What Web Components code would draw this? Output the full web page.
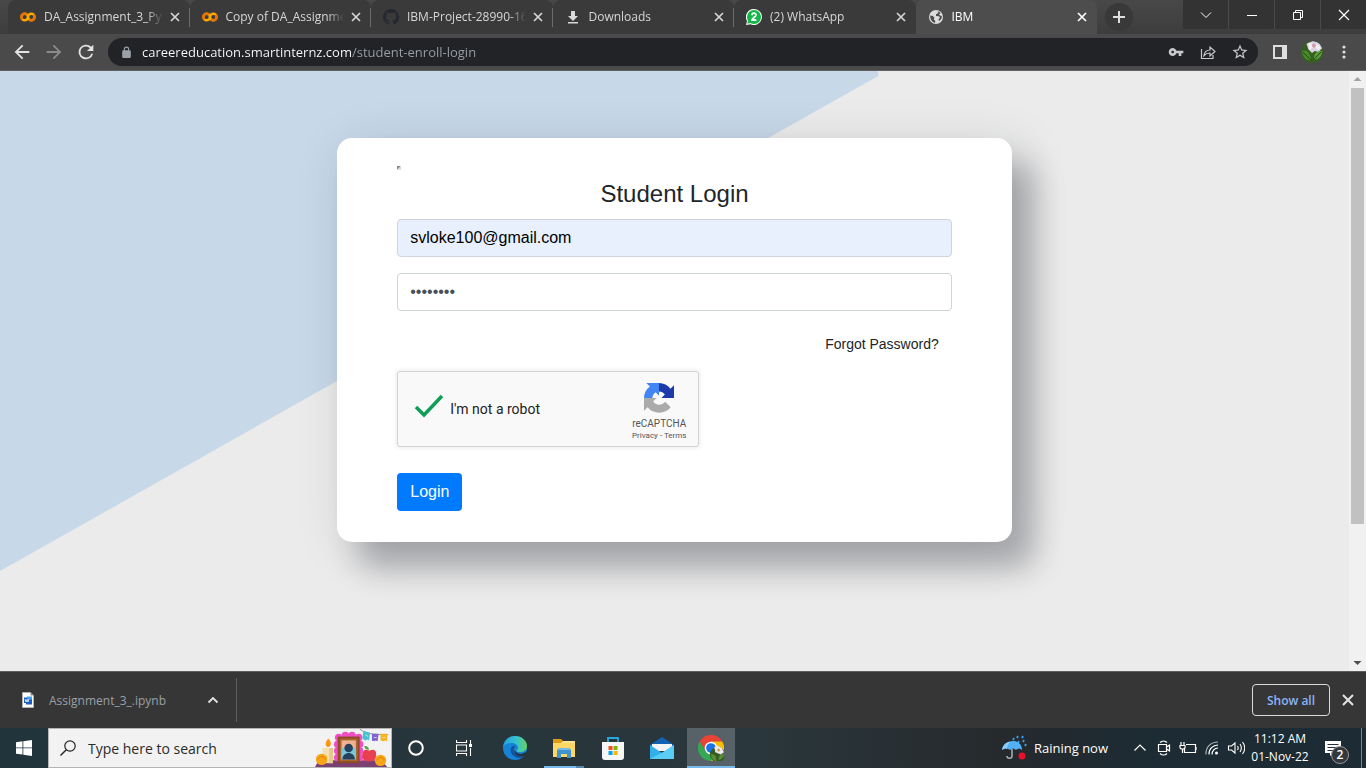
<!DOCTYPE html>
<html lang="en">
<head>
<meta charset="utf-8">
<title>IBM</title>
<style>
html,body{margin:0;height:100%}
body{font-family:"Open Sans","Noto Sans",sans-serif;font-size:12px;overflow:hidden}
</style>
</head>
<body>
<desktop-shell></desktop-shell>
<script>
const ICONS = {
colab:['0 0 24 24','<g fill="none" stroke-width="3.6"><circle cx="7" cy="12" r="4.9" stroke="#f9ab00"/><path d="M10.5 8.500A4.900 4.900 0 0 0 3.500 15.500" stroke="#e8710a"/><circle cx="17" cy="12" r="4.900" stroke="#f9ab00"/><path d="M13.500 15.500A4.900 4.900 0 0 0 20.500 8.500" stroke="#e8710a"/></g>'],
github:['0 0 16 16','<path fill="#24292f" d="M8 0C3.580 0 0 3.580 0 8c0 3.540 2.290 6.530 5.470 7.590.4.070.55-.17.55-.38 0-.19-.010-.82-.010-1.490-2.010.37-2.530-.49-2.690-.94-.090-.23-.48-.94-.82-1.130-.28-.15-.68-.52-.010-.53.63-.010 1.080.58 1.230.82.72 1.210 1.870.87 2.330.66.070-.52.28-.87.51-1.070-1.780-.2-3.640-.89-3.640-3.950 0-.87.31-1.590.82-2.150-.080-.2-.36-1.020.080-2.120 0 0 .67-.21 2.200.82a7.600 7.600 0 0 1 4 0c1.530-1.040 2.200-.82 2.200-.82.44 1.100.16 1.920.080 2.120.51.56.82 1.270.82 2.150 0 3.070-1.870 3.750-3.650 3.950.29.25.54.73.54 1.480 0 1.070-.010 1.930-.010 2.200 0 .21.15.46.55.38A8 8 0 0 0 16 8c0-4.420-3.580-8-8-8z"/>'],
download:['0 0 16 16','<path fill="#dadada" d="M6 2h4v5h3l-5 5-5-5h3zM3 13h10v1.500H3z"/>'],
whatsapp:['0 0 16 16','<path fill="#fff" d="M8 0a8 8 0 1 1-3.500 15.200L0 16l1-4A8 8 0 0 1 8 0z"/><circle cx="8" cy="8" r="7" fill="#12b846"/><path d="M1.200 14.800l1-4 3 3z" fill="#12b846"/><path d="M6 6.200c0-2.600 4-2.600 4-.2 0 1.800-4 3.200-4 5h4.400" fill="none" stroke="#fff" stroke-width="1.800"/>'],
globe:['0 0 16 16','<circle cx="8" cy="8" r="7" fill="#dcdcdc"/><path fill="#4b4b4b" d="M2.200 6.500 5 7l1.500 2-.8 1.500 1.500 1.300v2C4 13 2 10.500 2.200 6.500zM8.500 2l2 .5-.5 1.800-2 1L8 7l3 .3 1 1.500-1.500 1.500.5 1.700c2-1 3-3 2.800-5L12 6.500l-1-1L12.500 4C11.500 2.500 10 2 8.500 2z"/>'],
close:['0 0 16 16','<path d="M4 4l8 8m0-8l-8 8" stroke="currentColor" stroke-width="1.700"/>'],
plus:['0 0 16 16','<path d="M8 2v12M2 8h12" stroke="#dedede" stroke-width="2"/>'],
down:['0 0 16 16','<path d="M3 5.500l5 5 5-5" fill="none" stroke="#fff"/>'],
min:['0 0 16 16','<path d="M3 8.500h10" stroke="#fff"/>'],
max:['0 0 16 16','<path d="M3.500 5.500h7v7h-7zM5.500 5.500v-2h7v7h-2" fill="none" stroke="#fff"/>'],
wclose:['0 0 16 16','<path d="M3 3l10 10m0-10L3 13" stroke="#fff" stroke-width="1.200"/>'],
back:['0 0 24 24','<path fill="#e4e4e4" d="M20 11H7.830l5.590-5.590L12 4l-8 8 8 8 1.410-1.410L7.830 13H20z"/>'],
forward:['0 0 24 24','<path fill="#8b8b8b" d="M4 11h12.170l-5.590-5.590L12 4l8 8-8 8-1.410-1.410L16.170 13H4z"/>'],
reload:['0 0 24 24','<path fill="#e4e4e4" d="M17.650 6.350A8 8 0 1 0 19.730 14h-2.080A6 6 0 1 1 12 6c1.660 0 3.140.69 4.220 1.780L13 11h7V4z"/>'],
lock:['0 0 24 24','<path fill="#9aa0a6" d="M18 8h-1V6A5 5 0 0 0 7 6v2H6a2 2 0 0 0-2 2v10a2 2 0 0 0 2 2h12a2 2 0 0 0 2-2V10a2 2 0 0 0-2-2zM9 6a3 3 0 0 1 6 0v2H9z"/>'],
key:['0 0 24 24','<path fill="#c8c9cb" d="M12.700 10A6 6 0 1 0 12.700 14H16v4h4v-4h3v-4zM7 14a2 2 0 1 1 0-4 2 2 0 0 1 0 4z"/>'],
share:['0 0 16 16','<path d="M1.500 5v9.500H13V11M4 11.500c.5-3.500 2.500-5.500 6-5.500V3l5 4.500-5 4.500V9c-2.500 0-4.500.8-6 2.500z" fill="none" stroke="#c8c9cb" stroke-width="1.200"/>'],
star:['0 0 24 24','<path fill="#c8c9cb" d="M22 9.240l-7.190-.62L12 2 9.190 8.630 2 9.240l5.460 4.730L5.820 21 12 17.270 18.180 21l-1.630-7.030zM12 15.400l-3.760 2.270 1-4.280-3.320-2.880 4.380-.38L12 6.100l1.710 4.040 4.380.38-3.320 2.880 1 4.280z"/>'],
panel:['0 0 16 16','<path fill="#dedede" fill-rule="evenodd" d="M1 1h14v14H1zM3 3v10h7V3z"/>'],
avatar:['0 0 24 24','<clipPath id="c"><circle cx="12" cy="12" r="12"/></clipPath><g clip-path="url(#c)"><path fill="#35601f" d="M0 0h24v24H0z"/><path fill="#3c5a28" d="M0 4l7-4 2 7-7 3z"/><path fill="#d9d3e4" d="M6 3l7-3 7 2 3 6-4 4-4-1-3 2-4-4z"/><path fill="#f3eff6" d="M8 2l4 1 1 4-4 3zM17 3l4 3-1 4-4-2z"/><circle cx="14" cy="5" r="2.200" fill="#d49fbd"/><circle cx="14" cy="6" r="1" fill="#c8a840"/><path fill="#4b8a2c" d="M1 11c5-2 9 2 10 10-6 1-9-4-10-10z"/><path fill="#5c9a3c" d="M23 11c-6 0-9 2-9 9 5 1 9-3 9-9z"/><path stroke="#1f3d10" fill="none" d="M2 12l9 9M22 12l-8 8"/></g>'],
dots:['0 0 16 16','<g fill="#dedede"><circle cx="8" cy="3" r="1.600"/><circle cx="8" cy="8" r="1.600"/><circle cx="8" cy="13" r="1.600"/></g>'],
broken:['0 0 4 4','<path fill="#888" d="M0 0h4L0 4z"/><path fill="#ddd" d="M4 0v4H0z"/>'],
recaptcha:['0 0 64 64','<path fill="#1c3aa9" d="M64 32V5l-7.500 7.500A31.900 31.900 0 0 0 32 0v18a15 15 0 0 1 12.500 6.700L37 32z"/><path fill="#4285f4" d="M32 0H5l7.500 7.500A31.900 31.900 0 0 0 0 32h18a15 15 0 0 1 6.700-12.500L32 27z"/><path fill="#ababab" d="M0 32v27l7.500-7.500A31.900 31.900 0 0 0 57 51.500L45 40a15 15 0 0 1-25.500-1L27 32z"/>'],
doc:['0 0 12 16','<path fill="#fff" stroke="#b8b8b8" stroke-width=".8" d="M.5.5h8l3 3v12H.5z"/><path fill="#888" d="M8.500 0L12 3.500H8.500z"/><path fill="#1b5ebe" d="M2 5.500h8v7H4V11H2z"/><path fill="#41a5ee" d="M5 4.500h5v3H5z"/><path d="M3 7l1 3 1-2.500L6 10l1-3" fill="none" stroke="#fff" stroke-width=".8"/>'],
up:['0 0 16 16','<path d="M3.500 10.500L8 6l4.500 4.500" fill="none" stroke="#e2e2e2" stroke-width="1.800"/>'],
start:['0 0 16 16','<path fill="#fff" d="M0 2.200l6.500-.9v6.200H0zM7.300 1.200L16 0v7.500H7.300zM0 8.300h6.500v6.300L0 13.700zM7.300 8.300H16V16l-8.700-1.200z"/>'],
search:['0 0 16 16','<circle cx="10" cy="6" r="5.200" fill="none" stroke="#222" stroke-width="1.200"/><path d="M6.300 9.700L.5 15.500" stroke="#222" stroke-width="1.400"/>'],
altar:['0 0 78 40','<path fill="#7b3f74" d="M3 35l12-2h55l6 7H0z"/><g fill="#f04fc4"><circle cx="25" cy="9" r="4"/><circle cx="32" cy="7" r="4"/><circle cx="39" cy="7" r="4"/><circle cx="46" cy="9" r="4"/><circle cx="24" cy="16" r="4"/><circle cx="24" cy="23" r="4"/><circle cx="24" cy="30" r="4"/><circle cx="47" cy="16" r="4"/><circle cx="47" cy="23" r="4"/><circle cx="47" cy="30" r="4"/></g><path fill="#8b4b22" d="M24 8h23v28H24z"/><path fill="#a9662f" d="M26 10h19v24H26z"/><path fill="#efb393" d="M28 12h15v20H28z"/><path fill="#7cc6da" d="M28 20h15v12H28z"/><circle cx="35.500" cy="20" r="4.500" fill="#27405d"/><path fill="#27405d" d="M29 32c0-9 13-9 13 0z"/><path fill="#f4dfb0" d="M8 20h11v16H8z"/><path fill="#e8c887" d="M15 20h4v16h-4z"/><path fill="#ff9416" d="M14 10c5 5 2 9 0 9s-5-3 0-9z"/><g fill="#f7a617"><circle cx="7" cy="32" r="6"/><circle cx="69" cy="33" r="6"/></g><path fill="none" stroke="#dc7b0b" d="M3 32c2-4 7-4 8 0M65 33c2-4 7-4 8 0"/><path fill="#e83f51" d="M57 23c8-4 9 4 6 9-3 3-9 3-12 0-3-5 0-13 6-9z"/><path fill="#50a844" d="M57 22c-1-4-3-4-5-4 0 3 2 4 5 4z"/><path fill="none" stroke="#666" stroke-width=".7" d="M47 0c8 6 18 6 30 6"/><path fill="#45c1d4" d="M51 2l7 2-1 8-2-1-2 1-3-2z"/><path fill="#8065cf" d="M60 5h7l-1 8-2-1-2 1-2-1z"/><path fill="#f8b321" d="M69 5h7v8l-2-1-2 1-3-1z"/><path stroke="#fff" opacity=".7" d="M53 6l3 2M62 9h3M71 9h3"/>'],
cortana:['0 0 16 16','<circle cx="8" cy="8" r="6.800" fill="none" stroke="#fff" stroke-width="2"/>'],
taskview:['0 0 16 16','<path fill="none" stroke="#fff" stroke-width="1.100" d="M.5 0v2.500h10V0M.5 16v-2.500h10V16M.5 5h10v6H.5zM14.500 0v4M14.500 8v8"/><path fill="#fff" d="M13 4h3v3h-3z"/>'],
edge:['0 0 24 24','<linearGradient id="e" x1="0" x2="1"><stop stop-color="#249dde"/><stop offset=".55" stop-color="#35c3d0"/><stop offset="1" stop-color="#66d35d"/></linearGradient><circle cx="12" cy="12" r="12" fill="#1583d7"/><path fill="url(#e)" d="M0 11C1 4 6 0 12 0c7 0 12 5 12 10 0 4-3 6-7 6-3 0-4-1-3-2 2-2 1-6-4-7-4-.5-8 1-10 4z"/><path fill="#1351a0" d="M8.500 11c-3 5 2 11 8 11 3 0 5-2 6-4-5 3-12 1-12-4 0-2 1-3 2-4-1-.4-3-.3-4 1z"/><path fill="#24343b" d="M12.500 10c-3 4 1 8 6 8l4.500-2 1 2-1.500 1.500c-7 2-12-1-11-6 .2-1 .5-3 1-3.500z"/>'],
folder:['0 0 24 24','<path fill="#e09b14" d="M1 3h8l2 2h12v4H1z"/><path fill="#ffd764" d="M1 7h22v14H1z"/><path fill="#ffe592" d="M11 5h12v2H9z"/><path fill="#3f93d1" d="M5 14l2-2h10l2 2v8h-4v-4H9v4H5z"/><path fill="#76bae7" d="M7 12h10l2 2H5z"/>'],
store:['0 0 24 24','<path fill="none" stroke="#27a8df" stroke-width="1.800" d="M7 6V2h10v4"/><path fill="#f7f7f7" d="M1 6h22v15a3 3 0 0 1-3 3H4a3 3 0 0 1-3-3z"/><path fill="#f25022" d="M7.500 10h4v4h-4z"/><path fill="#7fba00" d="M12.500 10h4v4h-4z"/><path fill="#00a4ef" d="M7.500 15h4v4h-4z"/><path fill="#ffb900" d="M12.500 15h4v4h-4z"/>'],
mail:['0 0 24 24','<path fill="#1263b5" d="M0 9l12-8 12 8v5H0z"/><path fill="#f4f4f4" d="M2 8h20v7H2z"/><path fill="#32aeea" d="M0 9l12 8 12-8v14H0z"/><path fill="#58cdf5" d="M0 23l15-8 9-6v14z"/>'],
chrome:['0 0 24 24','<path fill="#ea4335" d="M1.600 6A12 12 0 0 1 22.400 6H12L7 15z"/><path fill="#34a853" d="M1.600 6A12 12 0 0 0 12 24l5-9-10 0z"/><path fill="#fbbc04" d="M22.400 6A12 12 0 0 1 12 24l5-9-5-9z"/><circle cx="12" cy="12" r="5.800" fill="#fff"/><circle cx="12" cy="12" r="4.500" fill="#1a73e8"/><g transform="translate(11 10)"><circle cx="7" cy="8" r="7" fill="#345b20"/><path fill="#ece7e8" d="M4 1l3-1 4 2 2 4-3 2-5-2z"/><circle cx="8" cy="4" r="1.200" fill="#bda04c"/><path fill="#5a8c36" d="M1 8c4-1 5 2 5 6-3 0-5-3-5-6zm12-1c-4 0-5 3-5 6 3 0 5-3 5-6z"/></g>'],
umbrella:['0 0 26 26','<path stroke="#3ca0ee" stroke-width="1.800" d="M13 3l-1 2m5-4l-1 2m6-2l-1 2m-3 3l-1 2m6-3l-1 2m3 2l-1 2"/><path fill="#54b0f4" d="M1 15C2 4 21 2 21 15c-2-2-4-2-6 0-2-2-4-2-6 0-3-2-5-2-8 0z"/><path fill="#8bcdfb" d="M1 15C2 9 6 7 9 7c-2 2-3 5-3 7-2-1-3 0-5 1z"/><path fill="none" stroke="#aab4bb" stroke-width="1.500" d="M11 14v7c0 3-5 3-5 0"/><circle cx="21" cy="21" r="3.500" fill="#e8112d"/>'],
chevron:['0 0 16 16','<path d="M2.500 10.500L8 5l5.500 5.500" fill="none" stroke="#fff" stroke-width="1.200"/>'],
meet:['0 0 16 16','<path d="M2.500 4.500h8v7h-8zM10.500 7l3-2v6l-3-2M4 2.500c2-2 5-2 7 0M4 13.500c2 2 5 2 7 0" fill="none" stroke="#fff" stroke-width="1.200"/>'],
battery:['0 0 18 16','<path d="M7 4.500h9.500v8H5.500V9M17 7v3M2 2v3m3-3v3M1 5.500h5v2c0 2-5 2-5 0zM3.500 9v4" fill="none" stroke="#fff" stroke-width="1.200"/>'],
wifi:['0 0 16 16','<g fill="none" stroke="#fff" stroke-width="1.200"><path d="M2 14.500C1.500 7 7 2 14 2" opacity=".65"/><path d="M5 14.500C4.700 9 9 5 14 5"/><path d="M8 14.500C8 11 10.500 8 14 8"/></g><circle cx="12.500" cy="13" r="1.500" fill="#fff"/>'],
sound:['0 0 18 16','<path d="M1.500 6h3L8 3v10l-3.500-3h-3zM10.500 6c1 1.500 1 2.500 0 4M13 4c2 3 2 5 0 8M15.500 2c3 4 3 8 0 12" fill="none" stroke="#fff" stroke-width="1.100"/>'],
notice:['0 0 16 16','<path fill="#fff" d="M0 1h16v12H8l-3 3v-3H0z"/><path stroke="#22313a" stroke-width="1.200" d="M2.500 4.500h11M2.500 7.500h11M2.500 10.500h8"/>'],
triup:['0 0 17 17','<path fill="#a3a3a3" d="M8.500 6l4 4h-8z"/>'],
tridown:['0 0 17 17','<path fill="#505050" d="M4.500 7h8l-4 4z"/>']
};

const BASE = `*{box-sizing:border-box}button{font:inherit;color:inherit;background:none;border:0;padding:0;margin:0;display:grid;place-items:center}a{color:inherit;text-decoration:none}`;

function define(name, css, html) {
  const template = document.createElement('template');
  template.innerHTML = `<style>${BASE}${css}</style>${html}`;
  customElements.define(name, class extends HTMLElement {
    constructor() {
      super();
      this.attachShadow({mode: 'open'}).append(template.content.cloneNode(true));
    }
  });
}

customElements.define('ui-icon', class extends HTMLElement {
  constructor() { super(); this.attachShadow({mode: 'open'}); }
  connectedCallback() {
    const [box, art] = ICONS[this.getAttribute('name')];
    const w = this.getAttribute('w') || 16, h = this.getAttribute('h') || w;
    this.shadowRoot.innerHTML = `<style>:host{display:block;flex:none;line-height:0}svg{display:block}</style>
      <svg width="${w}" height="${h}" viewBox="${box}" aria-hidden="true">${art}</svg>`;
  }
});

define('browser-tab', `
:host{display:flex;flex:1;min-width:0;align-items:center;padding:0 7px 0 12px;background:#3a3a3a;color:#d6d6d6;border-radius:8px 8px 0 0;position:relative}
:host(:not([active]))::after{content:"";position:absolute;right:0;top:8px;width:1px;height:19px;background:#6c6c6c}
:host([last])::after{display:none}
:host([active]){background:#4d4d4d;color:#fff}
.title{flex:1;min-width:0;height:18px;margin:0 4px 0 8px;line-height:18px;overflow:hidden;white-space:nowrap;display:block;text-align:left;-webkit-mask:linear-gradient(90deg,#000 calc(100% - 16px),transparent)}
.close{width:16px;height:16px}`,
`<slot name="icon"></slot><button class="title"><slot></slot></button><button class="close" aria-label="Close tab"><ui-icon name="close"></ui-icon></button>`);

define('tab-strip', `
:host{display:flex;height:34px;background:linear-gradient(#484848,#3d3d3d)}
.tabs{display:flex;flex:1;min-width:0;padding-left:8px}
.new{width:86px;padding:3px 8px}
.new button{width:28px;height:28px;border-radius:14px;background:#393939}
.controls{display:grid;grid-template-columns:repeat(4,1fr);gap:1px;width:183px;height:29px;background:#4a4a4a}
.controls button{background:#333}`,
`<nav class="tabs">
<browser-tab><ui-icon slot="icon" name="colab"></ui-icon>DA_Assignment_3_Python</browser-tab>
<browser-tab><ui-icon slot="icon" name="colab"></ui-icon>Copy of DA_Assignment_3</browser-tab>
<browser-tab><ui-icon slot="icon" name="github"></ui-icon>IBM-Project-28990-1660</browser-tab>
<browser-tab><ui-icon slot="icon" name="download"></ui-icon>Downloads</browser-tab>
<browser-tab last><ui-icon slot="icon" name="whatsapp"></ui-icon>(2) WhatsApp</browser-tab>
<browser-tab active><ui-icon slot="icon" name="globe"></ui-icon>IBM</browser-tab>
</nav>
<div class="new"><button aria-label="New tab"><ui-icon name="plus"></ui-icon></button></div>
<div class="controls"><button aria-label="Search tabs"><ui-icon name="down"></ui-icon></button><button aria-label="Minimize"><ui-icon name="min"></ui-icon></button><button aria-label="Restore"><ui-icon name="max"></ui-icon></button><button aria-label="Close"><ui-icon name="wclose"></ui-icon></button></div>`);

define('address-bar', `
:host{display:flex;align-items:center;height:37px;padding:0 6px;background:#4a4a4a;border-bottom:1px solid #606060}
button{width:32px;height:28px;flex:none}
form{flex:1;min-width:0;height:28px;margin:0 6px;padding:0 2px;border-radius:14px;background:#222327;display:flex;align-items:center}
input{flex:1;min-width:0;height:20px;padding:0;border:0;outline:0;font:13px "Open Sans",sans-serif;color:#fff;background:linear-gradient(90deg,#fff 210px,#9aa0a6 210px);-webkit-background-clip:text;background-clip:text;-webkit-text-fill-color:transparent}`,
`<button aria-label="Back"><ui-icon name="back" w="22"></ui-icon></button>
<button aria-label="Forward"><ui-icon name="forward" w="22"></ui-icon></button>
<button aria-label="Reload"><ui-icon name="reload" w="22"></ui-icon></button>
<form><button type="button" aria-label="Site information"><ui-icon name="lock" w="13"></ui-icon></button>
<input aria-label="Address" value="careereducation.smartinternz.com/student-enroll-login" spellcheck="false">
<button type="button" aria-label="Passwords"><ui-icon name="key"></ui-icon></button>
<button type="button" aria-label="Share"><ui-icon name="share"></ui-icon></button>
<button type="button" aria-label="Bookmark"><ui-icon name="star" w="18"></ui-icon></button></form>
<button aria-label="Side panel"><ui-icon name="panel"></ui-icon></button>
<button aria-label="Profile"><ui-icon name="avatar" w="22"></ui-icon></button>
<button aria-label="Menu"><ui-icon name="dots"></ui-icon></button>`);

define('captcha-box', `
:host{display:flex;width:302px;height:76px;background:#f9f9f9;border:1px solid #d3d3d3;border-radius:3px;box-shadow:0 0 4px 1px rgba(0,0,0,.08);font-family:Roboto,sans-serif;color:#222}
label{flex:1;display:flex;align-items:center;gap:6px;padding-left:16px;font-size:14px}
input{appearance:none;margin:0 0 6px;width:30px;height:30px;background:url("data:image/svg+xml,%3Csvg xmlns='http://www.w3.org/2000/svg' viewBox='0 0 30 30'%3E%3Cpath d='M2 16l8 8L28 5' fill='none' stroke='%230f9d58' stroke-width='3.5'/%3E%3C/svg%3E")}
.brand{width:78px;display:flex;flex-direction:column;align-items:center;padding-top:11px;color:#555;font-size:10px;line-height:12px}
ui-icon{margin-bottom:5px}
small{font-size:8px;line-height:12px}`,
`<label><input type="checkbox" checked>I'm not a robot</label>
<div class="brand"><ui-icon name="recaptcha" w="30"></ui-icon><span>reCAPTCHA</span><small><a href="#privacy">Privacy</a> - <a href="#terms">Terms</a></small></div>`);

define('login-card', `
:host{display:block;width:50%;height:max-content;padding:24px 60px 31px;border-radius:15px;background:#fff;color:#212529;font:16px/24px "Liberation Sans",Arial,sans-serif;box-shadow:22px 26px 30px rgba(30,34,45,.29),8px 8px 50px rgba(30,34,45,.14)}
form{display:flex;flex-direction:column}
.logo{height:12px;padding-top:4px}
h1{margin:6px 0 11px;font-size:24px;line-height:28px;font-weight:400;text-align:center}
input{width:100%;height:38px;padding:0 12px;border:1px solid #ced4da;border-radius:4px;font:inherit;color:#495057;background:#fff}
input[type=email]{background:#e8f0fe;color:#000;margin-bottom:16px}
.forgot{align-self:flex-end;margin:21px 13px 15px;font-size:14px}
button{align-self:flex-start;height:38px;margin-top:26px;padding:0 13px;border-radius:4px;background:#007bff;color:#fff}`,
`<form><div class="logo"><ui-icon name="broken" w="4"></ui-icon></div><h1>Student Login</h1>
<input type="email" aria-label="Email" value="svloke100@gmail.com"><input type="password" aria-label="Password" value="password">
<a class="forgot" href="#forgot">Forgot Password?</a>
<captcha-box></captcha-box>
<button type="button">Login</button></form>`);

define('page-scrollbar', `
:host{display:flex;flex-direction:column;width:17px;flex:none;background:#f1f1f1}
.track{flex:1;padding:0 2px}.thumb{height:77%;background:#c1c1c1}`,
`<ui-icon name="triup" w="17"></ui-icon><div class="track"><div class="thumb"></div></div><ui-icon name="tridown" w="17"></ui-icon>`);

define('login-page', `
:host{display:flex;flex:1;min-height:0;overflow:hidden;background:#ebebeb}
main{flex:1;min-width:0;display:flex;justify-content:center;align-items:flex-start;padding-top:67px;position:relative}
main::before{content:"";position:absolute;inset:0;background:#c7d8e8;clip-path:polygon(0 0,65.1% 0,65.1% 5px,0 500px)}
login-card{position:relative}`,
`<main><login-card></login-card></main><page-scrollbar></page-scrollbar>`);

define('download-shelf', `
:host{display:flex;align-items:center;height:57px;padding:0 8px 0 22px;background:#363636;border-top:1px solid #5c5c5c;color:#9aa0a6}
.item{display:flex;align-items:center;height:44px;width:215px;padding-right:15px;border-right:1px solid #5f5f5f}
.item a{flex:1;margin-left:15px}
.all{margin-left:auto;margin-right:8px;width:78px;height:32px;border:1px solid #dadada;border-radius:4px;color:#8ab4f8;font-weight:600}
.x{width:20px;height:20px;color:#e0e0e0}`,
`<div class="item"><ui-icon name="doc" w="12" h="16"></ui-icon><a href="#file">Assignment_3_.ipynb</a><button aria-label="More"><ui-icon name="up"></ui-icon></button></div>
<button class="all">Show all</button><button class="x" aria-label="Close"><ui-icon name="close" w="20"></ui-icon></button>`);

define('task-bar', `
:host{display:flex;height:40px;background:linear-gradient(90deg,#22343b,#2a373c 55%,#262a2d 73%,#1c2b34 85%,#1c2b34);color:#fff;font-size:13px}
button{width:48px;height:40px;flex:none}
.search{display:flex;align-items:center;width:344px;background:#f2f2f2;border:1px solid #b4b4b4;padding-left:11px}
.search input{flex:1;min-width:0;border:0;outline:0;background:none;padding:0 0 0 12px;font:14px "Open Sans",sans-serif}
.search input::placeholder{color:#2b2b2b;opacity:1}
.apps{display:flex;gap:1px;margin-left:3px}
.open{background:linear-gradient(90deg,#76b9ed 32px,#5488b0 32px) center bottom/40px 2px no-repeat}
.now{background:#566268;border-bottom:2px solid #76b9ed;padding-top:2px}
.tray{margin-left:auto;display:flex;align-items:center}
.weather{display:flex;align-items:center;gap:7px;width:auto;margin-right:20px}
.tray .t{width:24px}
.clock{width:64px;text-align:center;font-size:12px;line-height:18px}
.notice{position:relative;width:50px;padding-right:7px;border-right:1px solid #76828a;margin-right:4px}
.notice b{position:absolute;left:19px;top:18px;width:18px;height:18px;border-radius:9px;background:#33383c;border:1px solid #999;font-size:12px;line-height:16px;font-weight:600}`,
`<button aria-label="Start"><ui-icon name="start"></ui-icon></button>
<div class="search"><ui-icon name="search"></ui-icon><input aria-label="Search" placeholder="Type here to search"><ui-icon name="altar" w="78" h="38"></ui-icon></div>
<button aria-label="Cortana"><ui-icon name="cortana"></ui-icon></button>
<button aria-label="Task view"><ui-icon name="taskview"></ui-icon></button>
<div class="apps"><button aria-label="Edge"><ui-icon name="edge" w="24"></ui-icon></button>
<button class="open" aria-label="File Explorer"><ui-icon name="folder" w="24"></ui-icon></button>
<button aria-label="Store"><ui-icon name="store" w="24"></ui-icon></button>
<button aria-label="Mail"><ui-icon name="mail" w="24"></ui-icon></button>
<button class="now" aria-label="Chrome"><ui-icon name="chrome" w="26"></ui-icon></button></div>
<div class="tray"><button class="weather"><ui-icon name="umbrella" w="26"></ui-icon><span>Raining now</span></button>
<button class="t" aria-label="Hidden icons"><ui-icon name="chevron"></ui-icon></button>
<button class="t" aria-label="Camera"><ui-icon name="meet"></ui-icon></button>
<button class="t" aria-label="Battery"><ui-icon name="battery" w="18" h="16"></ui-icon></button>
<button class="t" aria-label="Network"><ui-icon name="wifi"></ui-icon></button>
<button class="t" aria-label="Volume"><ui-icon name="sound" w="18" h="16"></ui-icon></button>
<time class="clock">11:12 AM<br>01-Nov-22</time>
<button class="notice" aria-label="Notifications"><ui-icon name="notice"></ui-icon><b>2</b></button></div>`);

define('desktop-shell', `:host{display:flex;flex-direction:column;height:100vh}`,
`<tab-strip></tab-strip><address-bar></address-bar><login-page></login-page><download-shelf></download-shelf><task-bar></task-bar>`);
</script>
</body>
</html>
